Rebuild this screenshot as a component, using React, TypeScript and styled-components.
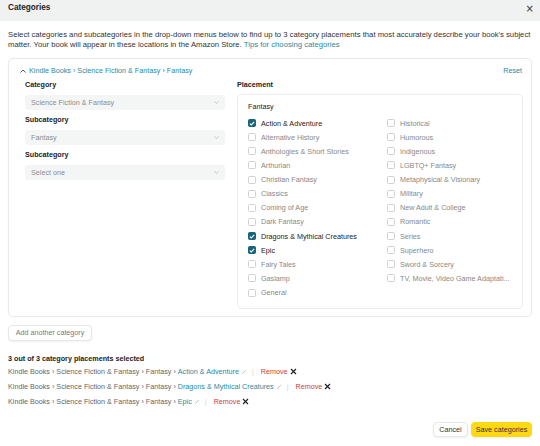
import React from "react";
import styled, { createGlobalStyle } from "styled-components";

const Global = createGlobalStyle`
  html, body { margin: 0; padding: 0; background: #fff; }
  body {
    font-family: "Liberation Sans", Arial, sans-serif;
    font-size: 7.2px;
    color: #333;
  }
  * { box-sizing: border-box; }
`;

const Modal = styled.div`
  width: 540px;
  height: 446px;
  display: flex;
  flex-direction: column;
  background: #fff;
`;

const Header = styled.div`
  height: 21px;
  flex: none;
  background: #f0f2f2;
  display: flex;
  justify-content: space-between;
  align-items: flex-start;
  padding: 3px 6px 0 8px;
`;

const Title = styled.div`
  font-size: 8.2px;
  line-height: 9px;
  font-weight: 700;
  color: #222;
`;

const Close = styled.button`
  border: none;
  background: none;
  padding: 0;
  margin-top: 1px;
  font-size: 10px;
  line-height: 10px;
  color: #333;
  font-family: "DejaVu Sans", sans-serif;
`;

const Body = styled.div`
  flex: 1;
  display: flex;
  flex-direction: column;
  padding: 9px 8px 9px 8px;
`;

const Intro = styled.p`
  margin: 0;
  line-height: 10px;
  font-size: 7.7px;
  color: #333;
`;

const Link = styled.a`
  color: #2b8a9c;
  text-decoration: none;
`;

const Card = styled.div`
  margin-top: 8px;
  border: 1px solid #e9eaea;
  border-radius: 5px;
  padding: 7px 8px 7px 11px;
  box-shadow: 0 0 2px rgba(0, 0, 0, 0.04);
`;

const CardTop = styled.div`
  display: flex;
  justify-content: space-between;
  align-items: center;
  line-height: 10px;
  padding-right: 1px;
`;

const Crumb = styled.div`
  display: flex;
  align-items: center;
  gap: 3px;
  color: #2b8a9c;
`;

const Caret = styled.svg`
  width: 6px;
  height: 4px;
`;

const Columns = styled.div`
  display: grid;
  grid-template-columns: 200px minmax(0, 1fr);
  column-gap: 12px;
  padding-left: 5px;
  margin-top: 4px;
`;

const LeftCol = styled.div`
  display: flex;
  flex-direction: column;
`;

const Group = styled.div`
  display: flex;
  flex-direction: column;
  gap: 5px;
  padding-bottom: 5px;
`;

const Label = styled.div`
  font-weight: 700;
  line-height: 10px;
  color: #222;
`;

const Select = styled.div`
  height: 15px;
  border-radius: 3px;
  background: #f4f6f6;
  display: flex;
  align-items: center;
  justify-content: space-between;
  padding: 0 6px 0 6px;
  color: #8c8c8c;
`;

const Chevron = styled.svg`
  width: 5px;
  height: 3px;
`;

const RightCol = styled.div`
  display: flex;
  flex-direction: column;
  gap: 4px;
  min-width: 0;
`;

const PlacementBox = styled.div`
  border: 1px solid #ececec;
  border-radius: 5px;
  padding: 7px 6px 8px 10px;
`;

const BoxTitle = styled.div`
  line-height: 10px;
  color: #222;
  margin-bottom: 4px;
`;

const OptionCols = styled.div`
  display: flex;
`;

const OptionCol = styled.div<{ $fill?: boolean }>`
  ${(p) => (p.$fill ? "flex: 1; min-width: 0;" : "width: 139px; flex: none;")}
  display: flex;
  flex-direction: column;
`;

const Option = styled.label<{ $on?: boolean }>`
  height: 14.14px;
  display: flex;
  align-items: center;
  gap: 5px;
  color: ${(p) => (p.$on ? "#222" : "#888")};
  white-space: nowrap;
`;

const Box = styled.span<{ $on?: boolean }>`
  width: 8px;
  height: 8px;
  flex: none;
  border-radius: 1.5px;
  border: 1px solid ${(p) => (p.$on ? "#16637a" : "#cfd2d2")};
  background: ${(p) => (p.$on ? "#16637a" : "#fff")};
  display: flex;
  align-items: center;
  justify-content: center;
`;

const AddButton = styled.button`
  margin-top: 8px;
  align-self: flex-start;
  width: 84px;
  height: 16px;
  border: 1px solid #e6e6e6;
  border-radius: 4px;
  background: #fff;
  box-shadow: 0 1px 2px rgba(0, 0, 0, 0.05);
  font-family: inherit;
  font-size: 7.2px;
  color: #7a7a7a;
  padding: 0;
`;

const Summary = styled.div`
  margin-top: 13px;
  font-weight: 700;
  line-height: 10px;
  color: #222;
`;

const SelectedList = styled.div`
  display: flex;
  flex-direction: column;
`;

const SelectedRow = styled.div`
  height: 15.3px;
  display: flex;
  align-items: center;
  color: #666;
  white-space: pre;
`;

const Edit = styled.svg`
  width: 5px;
  height: 5px;
  margin-left: 3px;
`;

const Sep = styled.span`
  color: #d5d5d5;
  margin: 0 7px 0 5px;
`;

const Remove = styled.span`
  color: #d0413a;
`;

const RemoveX = styled.svg`
  width: 7px;
  height: 7px;
  margin-left: 2px;
`;

const Footer = styled.div`
  margin-top: auto;
  display: flex;
  justify-content: flex-end;
  gap: 3px;
`;

const FooterButton = styled.button<{ $primary?: boolean }>`
  height: 15px;
  padding: 0;
  width: ${(p) => (p.$primary ? "61px" : "35px")};
  border-radius: 4px;
  border: 1px solid ${(p) => (p.$primary ? "#ffd814" : "#e6e6e6")};
  background: ${(p) => (p.$primary ? "#ffd814" : "#fff")};
  box-shadow: 0 1px 2px rgba(0, 0, 0, 0.06);
  font-family: inherit;
  font-size: 7.2px;
  color: #333;
`;

const col1 = [
  ["Action & Adventure", true],
  ["Alternative History", false],
  ["Anthologies & Short Stories", false],
  ["Arthurian", false],
  ["Christian Fantasy", false],
  ["Classics", false],
  ["Coming of Age", false],
  ["Dark Fantasy", false],
  ["Dragons & Mythical Creatures", true],
  ["Epic", true],
  ["Fairy Tales", false],
  ["Gaslamp", false],
  ["General", false],
] as const;

const col2 = [
  "Historical",
  "Humorous",
  "Indigenous",
  "LGBTQ+ Fantasy",
  "Metaphysical & Visionary",
  "Military",
  "New Adult & College",
  "Romantic",
  "Series",
  "Superhero",
  "Sword & Sorcery",
  "TV, Movie, Video Game Adaptati...",
];

const Check = ({ on }: { on?: boolean }) => (
  <Box $on={on}>
    {on && (
      <svg width="6" height="5" viewBox="0 0 6 5">
        <path d="M0.8 2.6 L2.3 4 L5.2 0.9" stroke="#fff" strokeWidth="1.1" fill="none" />
      </svg>
    )}
  </Box>
);

const ChevronIcon = () => (
  <Chevron viewBox="0 0 5 3">
    <path d="M0.4 0.4 L2.5 2.5 L4.6 0.4" stroke="#b0b4b4" strokeWidth="0.7" fill="none" />
  </Chevron>
);

const selected = ["Action & Adventure", "Dragons & Mythical Creatures", "Epic"];

export default function App() {
  return (
    <Modal>
      <Global />
      <Header>
        <Title>Categories</Title>
        <Close aria-label="close">×</Close>
      </Header>
      <Body>
        <Intro>
          Select categories and subcategories in the drop-down menus below to find up to 3 category placements that most
          accurately describe your book's subject matter. Your book will appear in these locations in the Amazon Store.{" "}
          <Link>Tips for choosing categories</Link>
        </Intro>
        <Card>
          <CardTop>
            <Crumb>
              <Caret viewBox="0 0 6 4">
                <path d="M0.5 3.5 L3 1 L5.5 3.5" stroke="#444" strokeWidth="0.9" fill="none" />
              </Caret>
              <span>Kindle Books › Science Fiction &amp; Fantasy › Fantasy</span>
            </Crumb>
            <Link>Reset</Link>
          </CardTop>
          <Columns>
            <LeftCol>
              <Group>
                <Label>Category</Label>
                <Select>
                  <span>Science Fiction &amp; Fantasy</span>
                  <ChevronIcon />
                </Select>
              </Group>
              <Group>
                <Label>Subcategory</Label>
                <Select>
                  <span>Fantasy</span>
                  <ChevronIcon />
                </Select>
              </Group>
              <Group>
                <Label>Subcategory</Label>
                <Select>
                  <span>Select one</span>
                  <ChevronIcon />
                </Select>
              </Group>
            </LeftCol>
            <RightCol>
              <Label>Placement</Label>
              <PlacementBox>
                <BoxTitle>Fantasy</BoxTitle>
                <OptionCols>
                  <OptionCol>
                    {col1.map(([name, on]) => (
                      <Option key={name} $on={on}>
                        <Check on={on} />
                        {name}
                      </Option>
                    ))}
                  </OptionCol>
                  <OptionCol $fill>
                    {col2.map((name) => (
                      <Option key={name}>
                        <Check />
                        {name}
                      </Option>
                    ))}
                  </OptionCol>
                </OptionCols>
              </PlacementBox>
            </RightCol>
          </Columns>
        </Card>
        <AddButton>Add another category</AddButton>
        <Summary>3 out of 3 category placements selected</Summary>
        <SelectedList>
          {selected.map((s) => (
            <SelectedRow key={s}>
              <span>Kindle Books › Science Fiction &amp; Fantasy › Fantasy › </span>
              <Link>{s}</Link>
              <Edit viewBox="0 0 5 5">
                <path d="M0.6 4.4 L4.2 0.8" stroke="#b5b5b5" strokeWidth="0.8" fill="none" />
                <path d="M0.4 4.6 L0.8 3.4 L1.6 4.2 Z" fill="#b5b5b5" />
              </Edit>
              <Sep>|</Sep>
              <Remove>Remove</Remove>
              <RemoveX viewBox="0 0 7 7">
                <path d="M1 1 L6 6 M6 1 L1 6" stroke="#222" strokeWidth="1.2" fill="none" />
              </RemoveX>
            </SelectedRow>
          ))}
        </SelectedList>
        <Footer>
          <FooterButton>Cancel</FooterButton>
          <FooterButton $primary>Save categories</FooterButton>
        </Footer>
      </Body>
    </Modal>
  );
}
